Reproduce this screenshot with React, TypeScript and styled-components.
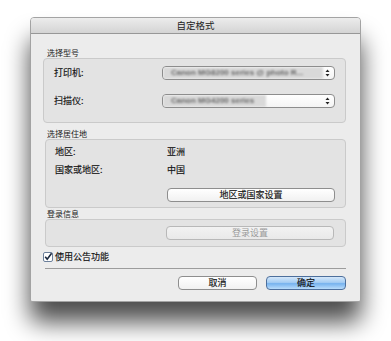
import React from "react";
import styled, { createGlobalStyle } from "styled-components";

const GlobalStyle = createGlobalStyle`
  html, body { margin: 0; padding: 0; background: #ffffff; }
  body {
    font-family: "Noto Sans CJK SC", "Noto Sans", "Liberation Sans", sans-serif;
    color: #111;
  }
`;

const Page = styled.div`
  padding: 17px 30px 39px 30px;
  width: 331px;
`;

const Frame = styled.div`
  position: relative;
  width: 331px;
  height: 285px;
  &::before {
    content: "";
    position: absolute;
    left: 0px;
    right: 0px;
    top: 22px;
    bottom: -20px;
    background: rgba(0, 0, 0, 0.7);
    filter: blur(12px);
    border-radius: 8px;
  }
`;

const Window = styled.div`
  position: relative;
  width: 331px;
  height: 285px;
  box-sizing: border-box;
  background: #ececec;
  border: 1px solid #a3a3a3;
  border-radius: 4px 4px 2px 2px;
  display: flex;
  flex-direction: column;
  overflow: hidden;
`;

const TitleBar = styled.div`
  height: 15px;
  flex: none;
  background: linear-gradient(#ececec, #d4d4d4);
  border-bottom: 1px solid #979797;
  font-size: 9.5px;
  line-height: 15px;
  text-align: center;
  color: #222;
`;

const Body = styled.div`
  padding: 14px 14px 12px 12px;
  display: flex;
  flex-direction: column;
`;

const GroupLabel = styled.div<{ $mt?: number }>`
  font-size: 8px;
  line-height: 10px;
  height: 10px;
  margin-top: ${(p) => p.$mt ?? 0}px;
  padding-left: 4px;
  color: #222;
`;

const GroupBox = styled.div<{ $indent?: number; $pt: number; $pb: number; $pl: number }>`
  margin-left: ${(p) => p.$indent ?? 0}px;
  background: #e3e3e3;
  border: 1px solid #cacaca;
  border-radius: 4px;
  padding: ${(p) => p.$pt - 1}px 10px ${(p) => p.$pb - 1}px ${(p) => p.$pl - 1}px;
  display: flex;
  flex-direction: column;
`;

const FormRow = styled.div<{ $h: number; $mt?: number }>`
  display: flex;
  align-items: center;
  height: ${(p) => p.$h}px;
  margin-top: ${(p) => p.$mt ?? 0}px;
`;

const FieldLabel = styled.div<{ $w: number }>`
  width: ${(p) => p.$w}px;
  flex: none;
  font-size: 9px;
  line-height: 12px;
  color: #111;
  -webkit-text-stroke: 0.15px #111;
`;

const Value = styled.div`
  font-size: 9px;
  line-height: 12px;
  color: #111;
  -webkit-text-stroke: 0.15px #111;
`;

const SelectBox = styled.div`
  position: relative;
  width: 173px;
  height: 14px;
  box-sizing: border-box;
  border: 1px solid #8d8d8d;
  border-radius: 4px;
  background: linear-gradient(#ffffff, #f4f4f4);
  display: flex;
  align-items: center;
  overflow: hidden;
`;

const BlurredText = styled.span<{ $w: number }>`
  width: ${(p) => p.$w}px;
  height: 12px;
  flex: none;
  background: #d9d9d9;
  filter: blur(1px);
  font-family: "Liberation Sans", sans-serif;
  font-size: 8px;
  font-weight: bold;
  line-height: 12px;
  color: #666;
  padding-left: 8px;
  box-sizing: border-box;
  white-space: nowrap;
  overflow: hidden;
`;

const Arrows = styled.svg`
  position: absolute;
  right: 4px;
  top: 2px;
`;

const PushButton = styled.button<{ $w: number; $disabled?: boolean; $primary?: boolean }>`
  width: ${(p) => p.$w}px;
  height: 14px;
  box-sizing: border-box;
  margin: 0;
  padding: 0;
  border-radius: 4px;
  font-family: inherit;
  font-size: 9px;
  line-height: 12px;
  text-align: center;
  border: 1px solid ${(p) => (p.$primary ? "#4d6f9c" : p.$disabled ? "#b8b8b8" : "#8e8e8e")};
  color: ${(p) => (p.$disabled ? "#9a9a9a" : "#111")};
  -webkit-text-stroke: ${(p) => (p.$disabled ? "0" : "0.15px #111")};
  background: ${(p) =>
    p.$primary
      ? "linear-gradient(#d4e7fa 0%, #a5cdf3 45%, #77b3ee 55%, #b9dcfb 100%)"
      : p.$disabled
      ? "linear-gradient(#f2f2f2, #e9e9e9)"
      : "linear-gradient(#ffffff, #f1f1f1)"};
`;

const CheckRow = styled.label`
  display: flex;
  align-items: center;
  height: 12px;
  margin-top: 4px;
  gap: 2px;
  font-size: 9px;
  line-height: 12px;
  color: #111;
  -webkit-text-stroke: 0.15px #111;
`;

const Separator = styled.div`
  height: 1px;
  margin: 5px 0 0 2px;
  background: #9c9c9c;
`;

const ButtonRow = styled.div`
  display: flex;
  justify-content: flex-end;
  gap: 9px;
  margin-top: 7px;
`;

function UpDown() {
  return (
    <Arrows width="5" height="8" viewBox="0 0 5 8">
      <path d="M2.5 0.5 L4.5 3 L0.5 3 Z" fill="#222" />
      <path d="M2.5 7.5 L4.5 5 L0.5 5 Z" fill="#222" />
    </Arrows>
  );
}

function CheckIcon() {
  return (
    <svg width="10" height="10" viewBox="0 0 10 10">
      <rect x="0.5" y="0.5" width="9" height="9" rx="1.5" fill="#fff" stroke="#6b7f9a" />
      <path d="M2.2 4.8 L4.2 7.3 L8.6 1.2" fill="none" stroke="#1b2a40" strokeWidth="1.6" />
    </svg>
  );
}

export default function App() {
  return (
    <>
      <GlobalStyle />
      <Page>
        <Frame>
          <Window>
            <TitleBar>自定格式</TitleBar>
            <Body>
              <GroupLabel>选择型号</GroupLabel>
              <GroupBox $pt={8} $pb={15} $pl={11}>
                <FormRow $h={14}>
                  <FieldLabel $w={108}>打印机:</FieldLabel>
                  <SelectBox>
                    <BlurredText $w={160}>Canon MG8200 series @ photo R...</BlurredText>
                    <UpDown />
                  </SelectBox>
                </FormRow>
                <FormRow $h={14} $mt={14}>
                  <FieldLabel $w={108}>扫描仪:</FieldLabel>
                  <SelectBox>
                    <BlurredText $w={103}>Canon MG4200 series</BlurredText>
                    <UpDown />
                  </SelectBox>
                </FormRow>
              </GroupBox>

              <GroupLabel $mt={6}>选择居住地</GroupLabel>
              <GroupBox $indent={2} $pt={7} $pb={6} $pl={10}>
                <FormRow $h={12}>
                  <FieldLabel $w={112}>地区:</FieldLabel>
                  <Value>亚洲</Value>
                </FormRow>
                <FormRow $h={12} $mt={6}>
                  <FieldLabel $w={112}>国家或地区:</FieldLabel>
                  <Value>中国</Value>
                </FormRow>
                <FormRow $h={14} $mt={12}>
                  <FieldLabel $w={112} />
                  <PushButton $w={168}>地区或国家设置</PushButton>
                </FormRow>
              </GroupBox>

              <GroupLabel $mt={1}>登录信息</GroupLabel>
              <GroupBox $indent={2} $pt={7} $pb={7} $pl={10}>
                <FormRow $h={14}>
                  <FieldLabel $w={111} />
                  <PushButton $w={168} $disabled>登录设置</PushButton>
                </FormRow>
              </GroupBox>

              <CheckRow>
                <CheckIcon />
                使用公告功能
              </CheckRow>
              <Separator />
              <ButtonRow>
                <PushButton $w={79}>取消</PushButton>
                <PushButton $w={80} $primary>确定</PushButton>
              </ButtonRow>
            </Body>
          </Window>
        </Frame>
      </Page>
    </>
  );
}
